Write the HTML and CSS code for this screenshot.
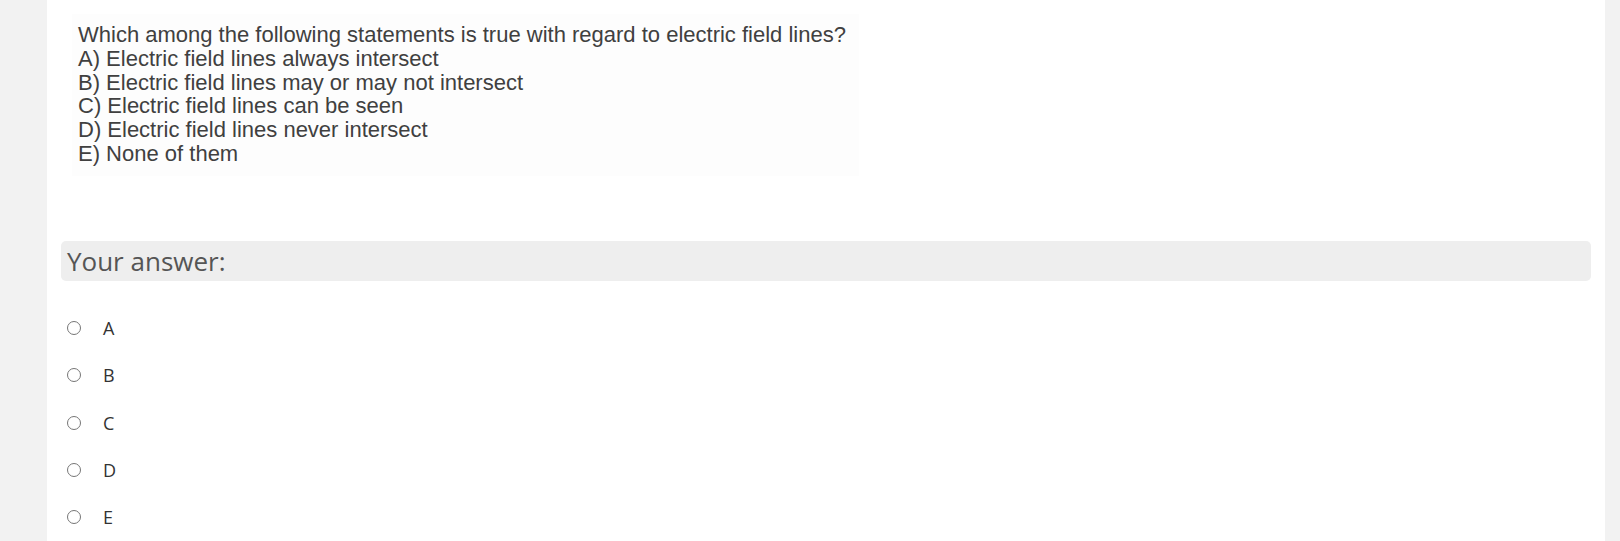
FILE: index.html
```html
<!DOCTYPE html>
<html>
<head>
<meta charset="utf-8">
<link rel="stylesheet" href="styles.css">
</head>
<body>
<div class="page">
  <div class="card">
    <div class="question-image">
      <p>Which among the following statements is true with regard to electric field lines?</p>
      <p>A) Electric field lines always intersect</p>
      <p>B) Electric field lines may or may not intersect</p>
      <p>C) Electric field lines can be seen</p>
      <p>D) Electric field lines never intersect</p>
      <p>E) None of them</p>
    </div>
    <div class="answer-label">Your answer:</div>
    <div class="options">
      <label class="option"><span class="radio"></span><span class="opt-text">A</span></label>
      <label class="option"><span class="radio"></span><span class="opt-text">B</span></label>
      <label class="option"><span class="radio"></span><span class="opt-text">C</span></label>
      <label class="option"><span class="radio"></span><span class="opt-text">D</span></label>
      <label class="option"><span class="radio"></span><span class="opt-text">E</span></label>
    </div>
  </div>
</div>
</body>
</html>
```

FILE: styles.css
```css
html, body {
  margin: 0;
  padding: 0;
  background: #f2f2f2;
  height: 100%;
  overflow: hidden;
}

.page {
  display: flex;
  height: 541px;
  padding-left: 47px;
  padding-right: 15px;
}

.card {
  flex: 1;
  background: #ffffff;
  padding: 14px 14px 0 14px;
  display: flex;
  flex-direction: column;
}

.question-image {
  margin-left: 11px;
  width: 781px;
  height: 153px;
  background: #fdfdfd;
  padding: 9px 0 0 6px;
  font-family: "Liberation Sans", Arial, sans-serif;
  font-size: 22px;
  line-height: 23.8px;
  color: #404040;
}

.question-image p {
  margin: 0;
  white-space: nowrap;
}

.answer-label {
  margin-top: 65px;
  height: 40px;
  background: #eeeeee;
  border-radius: 5px;
  padding-left: 6px;
  font-family: "Open Sans", sans-serif;
  font-size: 26px;
  line-height: 40px;
  color: #555555;
}

.options {
  margin-top: 24px;
  display: flex;
  flex-direction: column;
}

.option {
  height: 47.3px;
  display: flex;
  align-items: center;
  padding-left: 6px;
  font-family: "Open Sans", sans-serif;
  font-size: 18px;
  color: #333333;
}

.radio {
  width: 12px;
  height: 12px;
  border: 1.5px solid #767676;
  border-radius: 50%;
  box-sizing: content-box;
  flex: none;
}

.opt-text {
  margin-left: 22px;
}
```
